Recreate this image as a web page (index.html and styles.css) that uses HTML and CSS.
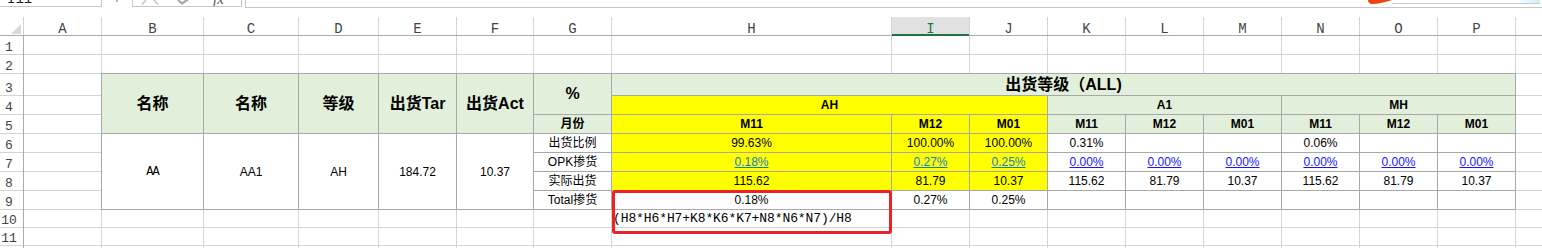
FILE: index.html
```html
<!DOCTYPE html>
<html lang="zh-CN">
<head>
<meta charset="utf-8">
<title>出货等级</title>
<link rel="stylesheet" href="styles.css">
</head>
<body>
<div class="topbar">
  <div class="namebox"><span>I11</span></div>
  <span class="grip"></span>
  <div class="fxbox">
    <svg class="ic-x" width="22" height="5" viewBox="0 0 22 5"><path d="M7 0 L3 4.5 M15 0 L19 4.5" stroke="#c4c4c4" stroke-width="1.6" fill="none"/></svg>
    <svg class="ic-ok" width="14" height="5" viewBox="0 0 14 5"><path d="M1 0 L5 3.5 L13 -2" stroke="#a8a8a8" stroke-width="2.2" fill="none"/></svg>
    <span class="fx">fx</span>
  </div>
  <div class="formula">
    <div class="overlay">
      <svg class="blob" width="24" height="4" viewBox="0 0 24 4"><path d="M0 0 H24 C18 2 10 4 4 4 C1.5 4 0 2 0 0Z" fill="#e8460e"/></svg>
      <div class="panel"></div>
    </div>
  </div>
</div>

<div class="colhead">
  <div class="corner"><span class="tri"></span></div>
  <div>A</div><div>B</div><div>C</div><div>D</div><div>E</div><div>F</div><div>G</div><div>H</div>
  <div class="sel">I</div><div>J</div><div>K</div><div>L</div><div>M</div><div>N</div><div>O</div><div>P</div><div></div>
</div>

<div class="main">
  <div class="rownums">
    <div>1</div><div>2</div><div>3</div><div>4</div><div>5</div><div>6</div><div>7</div><div>8</div><div>9</div><div>10</div><div>11</div><div></div>
  </div>
  <div class="sheet">
    <span></span><span></span><span></span><span></span><span></span><span></span><span></span><span></span><span></span><span></span><span></span><span></span><span></span><span></span><span></span><span></span><span></span>
    <span></span><span></span><span></span><span></span><span></span><span></span><span></span><span></span><span></span><span></span><span></span><span></span><span></span><span></span><span></span><span></span><span></span>

    <div class="tbl">
      <div class="g h16 rs3">名称</div>
      <div class="g h16 rs3">名称</div>
      <div class="g h16 rs3">等级</div>
      <div class="g h16 rs3">出货Tar</div>
      <div class="g h16 rs3">出货Act</div>
      <div class="g h16 rs2">%</div>
      <div class="g h16 cs9">出货等级（ALL)</div>

      <div class="y b cs3">AH</div>
      <div class="g b cs3">A1</div>
      <div class="g b cs3">MH</div>

      <div class="g b">月份</div>
      <div class="y b">M11</div><div class="y b">M12</div><div class="y b">M01</div>
      <div class="g b">M11</div><div class="g b">M12</div><div class="g b">M01</div>
      <div class="g b">M11</div><div class="g b">M12</div><div class="g b">M01</div>

      <div class="rs4 aa">AA</div>
      <div class="rs4">AA1</div>
      <div class="rs4">AH</div>
      <div class="rs4">184.72</div>
      <div class="rs4">10.37</div>
      <div>出货比例</div>
      <div class="y">99.63%</div><div class="y">100.00%</div><div class="y">100.00%</div>
      <div>0.31%</div><div></div><div></div>
      <div>0.06%</div><div></div><div></div>

      <div>OPK掺货</div>
      <div class="y"><span class="lk">0.18%</span></div><div class="y"><span class="lk">0.27%</span></div><div class="y"><span class="lk">0.25%</span></div>
      <div><span class="lk2">0.00%</span></div><div><span class="lk2">0.00%</span></div><div><span class="lk2">0.00%</span></div>
      <div><span class="lk2">0.00%</span></div><div><span class="lk2">0.00%</span></div><div><span class="lk2">0.00%</span></div>

      <div>实际出货</div>
      <div class="y">115.62</div><div class="y">81.79</div><div class="y">10.37</div>
      <div>115.62</div><div>81.79</div><div>10.37</div>
      <div>115.62</div><div>81.79</div><div>10.37</div>

      <div>Total掺货</div>
      <div>0.18%</div><div>0.27%</div><div>0.25%</div>
      <div></div><div></div><div></div>
      <div></div><div></div><div></div>
    </div>

    <span></span><span></span>
    <span></span><span></span>
    <span></span><span></span>
    <span></span><span></span>
    <span></span><span></span>
    <span></span><span></span>
    <span></span><span></span>

    <span></span><span></span><span></span><span></span><span></span><span></span><span></span><span class="fm">(H8*H6*H7+K8*K6*K7+N8*N6*N7)/H8</span><span></span><span></span><span></span><span></span><span></span><span></span><span></span><span></span><span></span>
    <span></span><span></span><span></span><span></span><span></span><span></span><span></span><span></span><span></span><span></span><span></span><span></span><span></span><span></span><span></span><span></span><span></span>
    <span></span><span></span><span></span><span></span><span></span><span></span><span></span><span></span><span></span><span></span><span></span><span></span><span></span><span></span><span></span><span></span><span></span>

    <div class="mark"></div>
  </div>
</div>
</body>
</html>
```

FILE: styles.css
```css
* { box-sizing: border-box; margin: 0; padding: 0; }
html, body { width: 1542px; height: 248px; overflow: hidden; background: #fff; }
body {
  font-family: "Liberation Sans", "Noto Sans CJK SC", sans-serif;
  font-size: 12px;
  color: #000;
}

/* ---------- formula bar ---------- */
.topbar { display: flex; align-items: flex-start; height: 17px; }
.namebox {
  width: 102px; height: 7px;
  border-right: 1px solid #c6c6c6; border-bottom: 1px solid #c6c6c6;
  display: flex; flex-direction: column; justify-content: flex-end;
  overflow: hidden; padding-left: 7px;
  font-family: "Liberation Mono", monospace; font-size: 14px; line-height: 14px; color: #222;
}
.grip { width: 2px; height: 2px; background: #b5b5b5; margin-left: 14px; }
.fxbox {
  margin-left: 14px; width: 110px; height: 7px;
  border: 1px solid #c6c6c6; border-top: 0;
  display: flex; align-items: flex-end; overflow: hidden;
}
.ic-x { align-self: flex-start; margin-left: 6px; }
.ic-ok { align-self: flex-start; margin-left: 16px; }
.fx {
  margin-left: 22px; font-family: "Liberation Serif", serif; font-style: italic;
  font-size: 15px; line-height: 14px; color: #555;
}
.formula {
  flex: 1; margin-left: 3px; height: 8px;
  border-left: 1px solid #c6c6c6; border-bottom: 1px solid #c6c6c6;
  display: flex; justify-content: flex-end;
}
.overlay { display: flex; align-items: flex-start; width: 172px; margin-right: 2px; }
.panel {
  flex: 1; height: 4px; border-bottom: 1px solid #c5cdd8;
  background: linear-gradient(90deg, #fff 84%, #cdeef7);
}

/* ---------- column header ---------- */
.colhead {
  display: grid;
  grid-template-columns: 23px 77px 101px 94px 79px 77px 76px 77px 279px repeat(8, 77px) 26px;
  column-gap: 1px;
  height: 19px;
  background: #d4d4d4;
  border-bottom: 1px solid #ababab;
}
.colhead > div {
  background: #fff;
  display: flex; justify-content: center; align-items: flex-end;
  font-family: "Liberation Mono", monospace; font-size: 14px; line-height: 12px; color: #444;
}
.colhead > .sel {
  background: #e1e1e1; color: #217346;
  box-shadow: inset 0 -1px 0 #217346, 0 1px 0 #217346;
}
.colhead > .corner { justify-content: flex-end; padding: 0 2px 1px 0; }
.tri {
  width: 10px; height: 10px; background: #d8d8d8;
  clip-path: polygon(100% 0, 100% 100%, 0 100%);
}

/* ---------- body ---------- */
.main { display: flex; align-items: flex-start; }
.rownums {
  width: 24px;
  border-right: 1px solid #ababab;
  display: grid;
  grid-template-rows: 18px 18px 21px repeat(6, 18px) 17px 17px 10px;
  row-gap: 1px;
  background: #d4d4d4;
}
.rownums > div {
  background: #fff;
  display: flex; justify-content: center; align-items: flex-end;
  padding-right: 5px;
  font-family: "Liberation Mono", monospace; font-size: 13px; line-height: 13px; color: #444;
}

.sheet {
  position: relative;
  flex: 1;
  display: grid;
  grid-template-columns: 77px 101px 94px 79px 77px 76px 77px 279px repeat(8, 77px) 26px;
  grid-template-rows: 18px 18px 21px repeat(6, 18px) 17px 17px 10px;
  gap: 1px;
  background: #d4d4d4;
}
.sheet > span { background: #fff; }
.sheet > .fm {
  display: flex; align-items: center; padding-left: 1px;
  font-family: "Liberation Mono", monospace; font-size: 13px; letter-spacing: -0.1px;
  white-space: nowrap; color: #000;
}

/* ---------- data table ---------- */
.tbl {
  grid-column: 2 / span 15;
  grid-row: 3 / span 7;
  display: grid;
  grid-template-columns: 101px 94px 79px 77px 76px 77px 279px repeat(8, 77px);
  grid-template-rows: 21px repeat(6, 18px);
  gap: 1px;
  background: #a8a8a8;
  outline: 1px solid #a8a8a8;
}
.tbl > div {
  background: #fff;
  display: flex; align-items: center; justify-content: center;
  white-space: nowrap; line-height: 14px;
}
.tbl > .g { background: #e2efda; }
.tbl > .y { background: #ffff00; }
.h16 { font-size: 16px; font-weight: 700; line-height: 18px; }
.b { font-weight: 700; }
.rs2 { grid-row: span 2; }
.rs3 { grid-row: span 3; }
.rs4 { grid-row: span 4; }
.cs3 { grid-column: span 3; }
.cs9 { grid-column: span 9; }
.aa { font-family: "Liberation Mono", monospace; font-size: 12px; letter-spacing: -1px; }
.lk { color: #0f7fd0; text-decoration: underline; }
.lk2 { color: #1515ff; text-decoration: underline; }

/* annotation */
.mark {
  position: absolute; left: 588px; top: 154px;
  width: 280px; height: 44px;
  border: 3px solid #ec2227; border-radius: 3px;
}
```
